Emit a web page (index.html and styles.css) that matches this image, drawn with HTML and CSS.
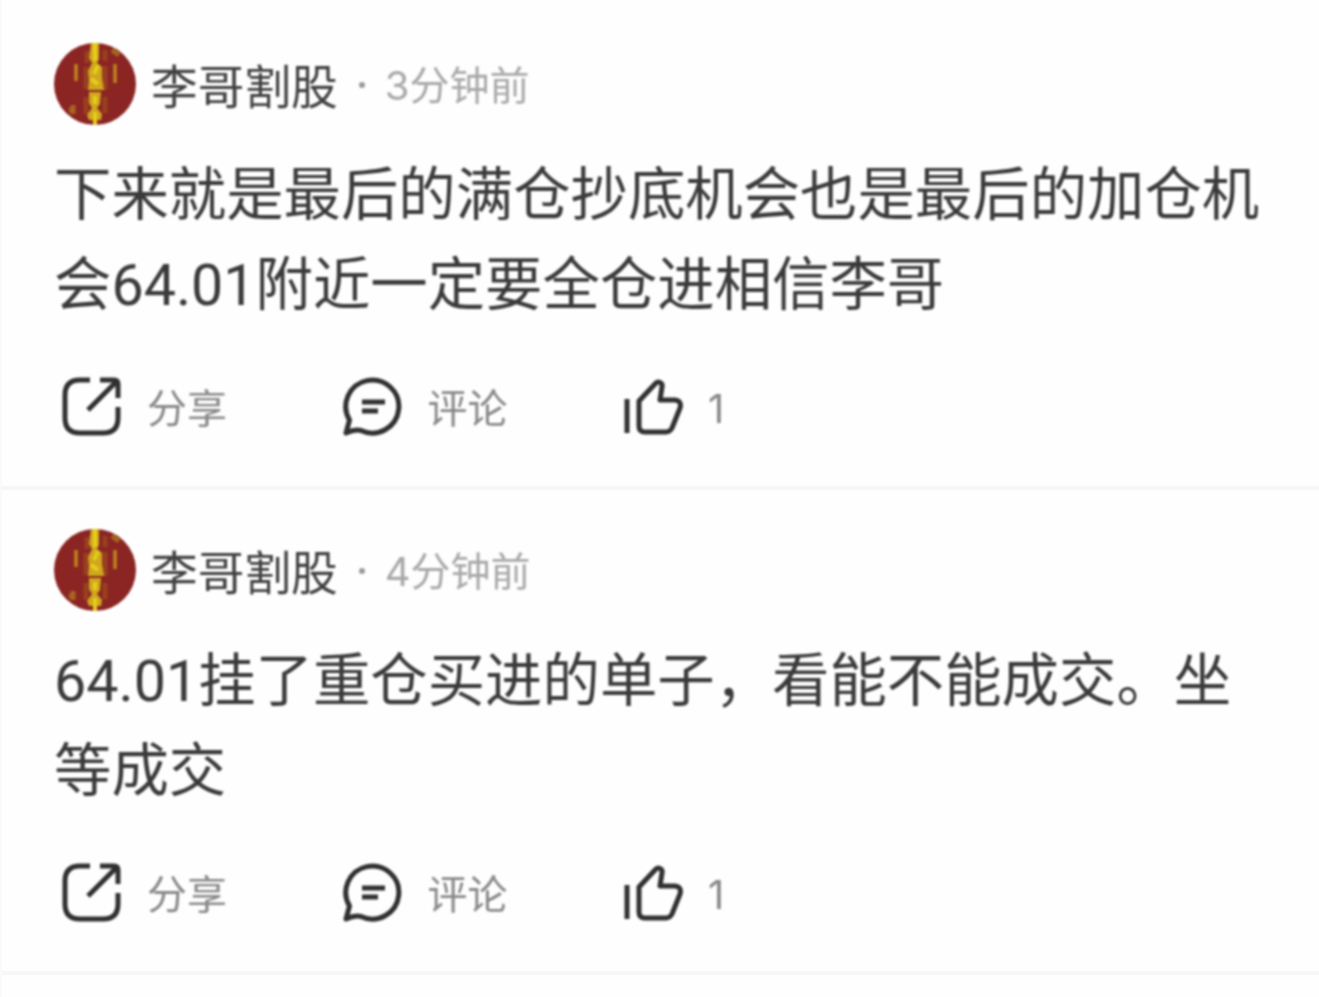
FILE: index.html
```html
<!DOCTYPE html>
<html lang="zh-CN">
<head>
    <meta charset="UTF-8">
    <meta name="viewport" content="width=device-width, initial-scale=1.0">
    <title>李哥割股</title>
    <link rel="stylesheet" href="styles.css">
</head>
<body>
    <!-- Shared icons -->
    <svg class="sprite">
        <symbol id="avatar" viewBox="0 0 82 82">
            <circle cx="41" cy="41" r="41" fill="#8a2523"/>
            <path d="M33 8v12M32 24v22M32 54v17M51 7v11M51 23v24M51 54v16" stroke="#a04c20" stroke-width="5" opacity=".7"/>
            <path d="M37 0h8v16l-2 4 5 4v11l2 12H34l1-10-1-9 4-8-3-5z" fill="#d0a71d"/>
            <path d="M35 49h12l-1 12-3 4 5 6-1 6h-4v5h-4v-5h-4l-2-5 5-7-3-5z" fill="#d0a71d"/>
            <path d="M41 0v18M44 22l-4 9M37 36l7 5M41 53v8M41 69v13" stroke="#e5cd1c" stroke-width="4"/>
            <path d="M22 21v17M61 21v19" stroke="#c0821f" stroke-width="3.500"/>
            <path d="M19 62v9M15 67h4M58 7l7 5" stroke="#a9641e" stroke-width="5" fill="none"/>
        </symbol>
        <symbol id="share" viewBox="0 0 60 60">
            <path d="M28 3H18Q3 3 3 18v23q0 15 15 15h23q15 0 15-15V30"/>
            <path d="M38 3h14q4 0 4 4v14M54 5L26 33"/>
        </symbol>
        <symbol id="comment" viewBox="0 0 60 60">
            <path d="M3 56l3.500-13A26.500 26.500 0 1 1 18 53.500Q12 52 3 56z"/>
            <path d="M19 25h23M19 34h16"/>
        </symbol>
        <symbol id="like" viewBox="0 0 60 60">
            <path d="M4 22v34"/>
            <path d="M16 24L32 7c3-4 8-1 7 3l-2 13h15q7 1 5 8l-8 20q-2 4-6 4H22q-6 0-6-6z"/>
        </symbol>
    </svg>

    <div class="feed">
        <article class="post">
            <div class="header">
                <svg class="avatar"><use href="#avatar"/></svg>
                <span class="name">李哥割股</span>
                <span class="dot"></span>
                <span class="time">3分钟前</span>
            </div>
            <p class="content">下来就是最后的满仓抄底机会也是最后的加仓机会64.01附近一定要全仓进相信李哥</p>
            <div class="actions">
                <div class="action">
                    <svg class="icon"><use href="#share"/></svg>
                    <span class="label">分享</span>
                </div>
                <div class="action">
                    <svg class="icon"><use href="#comment"/></svg>
                    <span class="label">评论</span>
                </div>
                <div class="action">
                    <svg class="icon"><use href="#like"/></svg>
                    <span class="label">1</span>
                </div>
            </div>
        </article>

        <article class="post">
            <div class="header">
                <svg class="avatar"><use href="#avatar"/></svg>
                <span class="name">李哥割股</span>
                <span class="dot"></span>
                <span class="time">4分钟前</span>
            </div>
            <p class="content">64.01挂了重仓买进的单子，看能不能成交。坐等成交</p>
            <div class="actions">
                <div class="action">
                    <svg class="icon"><use href="#share"/></svg>
                    <span class="label">分享</span>
                </div>
                <div class="action">
                    <svg class="icon"><use href="#comment"/></svg>
                    <span class="label">评论</span>
                </div>
                <div class="action">
                    <svg class="icon"><use href="#like"/></svg>
                    <span class="label">1</span>
                </div>
            </div>
        </article>
    </div>
</body>
</html>
```
FILE: styles.css
```css
* {
    margin: 0;
    padding: 0;
    box-sizing: border-box;
}

body {
    font-family: Inter, "Noto Sans CJK SC", sans-serif;
    background: #fefefe;
    color: #3a3a3a;
    height: 997px;
    overflow: hidden;
}

.sprite {
    display: none;
}

.feed {
    height: 997px;
    border-left: 2px solid #fafafa;
}

.post {
    height: 485px;
    padding: 39px 50px 0 52px;
    border-bottom: 4px solid #f7f7f7;
}

.post:first-child {
    height: 490px;
    padding-top: 43px;
}

.header {
    display: flex;
    align-items: center;
    height: 82px;
}

.avatar {
    width: 82px;
    height: 82px;
    margin-right: 15px;
    filter: blur(1px);
}

.name {
    padding-top: 5px;
    font-size: 46.700px;
    line-height: 82px;
    color: #404040;
}

.dot {
    width: 6px;
    height: 6px;
    margin: 2px 20px 0 21px;
    border-radius: 50%;
    background: #999;
}

.time {
    padding-top: 4px;
    font-size: 40px;
    line-height: 82px;
    color: #a8a8a8;
}

.content {
    margin: 26px 0 0;
    font-family: Roboto, "Noto Sans CJK SC", sans-serif;
    font-size: 57.400px;
    line-height: 90px;
}

.actions {
    display: flex;
    margin-top: 46px;
    padding-left: 8px;
}

.action {
    display: flex;
    align-items: center;
    width: 280.500px;
    height: 60px;
    font-size: 40px;
    line-height: 60px;
    color: #888;
}

.label {
    padding-top: 3px;
}

.icon {
    width: 60px;
    height: 60px;
    margin-right: 25px;
    fill: none;
    stroke: #303030;
    stroke-width: 5;
    stroke-linejoin: round;
}

.name,
.dot,
.time,
.content,
.action {
    filter: blur(1.1px);
}
```
